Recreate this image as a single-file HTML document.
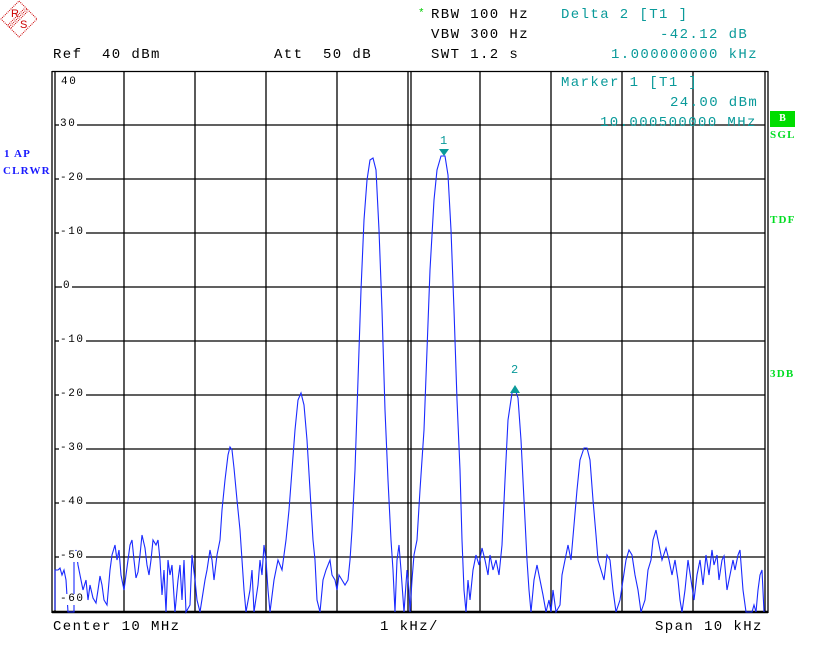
<!DOCTYPE html>
<html><head><meta charset="utf-8"><style>
body{margin:0;width:830px;height:670px;background:#fff;position:relative;overflow:hidden;font-family:"Liberation Mono",monospace;}
.t{position:absolute;font-size:14px;line-height:14px;white-space:pre;color:#000;letter-spacing:1.4px;}
.c{color:#0a9a9a;}
.g{position:absolute;font-family:"Liberation Serif",serif;font-weight:bold;font-size:11px;color:#00dd22;letter-spacing:1.2px;}
.bl{position:absolute;font-family:"Liberation Serif",serif;font-weight:bold;font-size:11px;color:#1a1aff;letter-spacing:1.2px;white-space:pre;}
.y{position:absolute;font-size:11px;line-height:11px;color:#000;background:#fff;padding:0 1px;letter-spacing:1.6px;}
</style></head><body>
<svg style="position:absolute;left:0;top:0" width="40" height="40">
<g stroke="#c00" fill="none" stroke-width="1" stroke-dasharray="1,1">
<polygon points="19,1 37,19 19,37 1,19"/>
<line x1="9" y1="27" x2="27" y2="9"/><line x1="11" y1="28" x2="28" y2="11"/><line x1="8" y1="25" x2="25" y2="8"/>
</g>
<text x="11" y="17" font-size="11" fill="#c00" font-family="Liberation Sans">R</text>
<text x="20" y="28" font-size="11" fill="#c00" font-family="Liberation Sans">S</text>
</svg>
<div class="t" style="left:53px;top:48px">Ref  40 dBm</div>
<div class="t" style="left:274px;top:48px">Att  50 dB</div>
<div class="t" style="left:418px;top:7px;color:#0c0;font-size:11px">*</div>
<div class="t" style="left:431px;top:8px">RBW 100 Hz</div>
<div class="t" style="left:431px;top:28px">VBW 300 Hz</div>
<div class="t" style="left:431px;top:48px">SWT 1.2 s</div>
<div class="t c" style="left:561px;top:8px">Delta 2 [T1 ]</div>
<div class="t c" style="left:660px;top:28px">-42.12 dB</div>
<div class="t c" style="left:611px;top:48px">1.000000000 kHz</div>
<svg style="position:absolute;left:0;top:0" width="830" height="670">
<g stroke="#000" stroke-width="1.3" fill="none">
<line x1="52" y1="71" x2="52" y2="613"/><line x1="55" y1="71" x2="55" y2="613"/>
<line x1="765" y1="71" x2="765" y2="613"/><line x1="768" y1="71" x2="768" y2="613"/>
<line x1="52" y1="71.5" x2="768" y2="71.5"/>
<line x1="124" y1="71" x2="124" y2="612"/><line x1="195" y1="71" x2="195" y2="612"/><line x1="266" y1="71" x2="266" y2="612"/><line x1="337" y1="71" x2="337" y2="612"/><line x1="408" y1="71" x2="408" y2="612"/><line x1="411" y1="71" x2="411" y2="612"/><line x1="480" y1="71" x2="480" y2="612"/><line x1="551" y1="71" x2="551" y2="612"/><line x1="622" y1="71" x2="622" y2="612"/><line x1="693" y1="71" x2="693" y2="612"/>
<line x1="55" y1="125" x2="765" y2="125"/><line x1="55" y1="179" x2="765" y2="179"/><line x1="55" y1="233" x2="765" y2="233"/><line x1="55" y1="287" x2="765" y2="287"/><line x1="55" y1="341" x2="765" y2="341"/><line x1="55" y1="395" x2="765" y2="395"/><line x1="55" y1="449" x2="765" y2="449"/><line x1="55" y1="503" x2="765" y2="503"/><line x1="55" y1="557" x2="765" y2="557"/>
<line x1="52" y1="612" x2="768" y2="612" stroke-width="2.5"/>
</g>
<polyline fill="none" stroke="#1a2aff" stroke-width="1.1" points="
55,610 55,570 58,570 60,568 62,575 64,570 66,580 68,612 74,612 74,560 76,550 78,565 80,575 83,590 86,580 88,600 90,585 93,598 96,603 98,590 100,576 102,585 104,600 107,605 110,570 112,555 115,545 117,560 119,550 121,575 124,590 126,575 128,560 130,545 132,540 134,560 136,578 138,572 140,555 142,535 145,548 147,565 149,575 151,560 153,540 156,545 158,540 160,560 162,595 164,570 166,612 168,560 170,575 172,565 175,612 178,580 180,565 182,600 184,560 186,612 190,605 192,555 195,580 197,600 200,612 205,580 207,570 210,550 212,560 214,580 217,555 220,540 222,510 225,480 228,455 230,447 232,450 234,468 237,500 240,530 242,560 244,590 246,612 250,590 252,570 254,612 258,585 260,560 262,575 264,545 266,560 268,590 270,612 274,580 278,560 282,570 286,540 289,510 292,470 295,430 298,400 301,393 304,405 307,440 310,490 313,540 315,560 317,600 320,612 323,580 326,570 330,560 332,575 335,580 337,590 339,575 342,580 345,585 348,580 350,560 352,530 355,470 358,380 361,290 364,220 367,180 370,160 373,158 376,170 379,230 382,310 385,410 388,480 391,540 393,570 395,612 397,560 399,545 401,570 404,612 407,570 409,590 410,612 412,580 414,555 417,540 420,490 424,430 427,350 430,270 434,200 437,170 441,156 445,156 448,175 451,230 454,310 457,400 460,470 462,540 464,590 466,612 468,580 470,600 473,570 476,555 479,565 482,548 485,560 488,575 490,555 493,570 496,560 499,575 502,545 505,480 508,420 512,393 515,389 518,398 521,440 524,500 527,560 529,590 531,612 534,580 537,565 540,580 543,595 546,612 549,600 551,612 553,590 556,612 560,605 562,575 565,560 568,545 571,560 574,525 577,490 580,460 584,448 587,448 590,460 593,500 596,535 598,560 601,570 604,580 607,555 610,560 613,590 616,612 620,600 623,580 626,560 629,550 632,555 635,575 638,590 641,612 645,600 648,570 651,560 653,540 656,530 659,545 662,560 666,548 669,560 672,575 675,560 678,580 680,600 682,612 685,590 688,560 691,580 694,600 697,575 700,560 703,585 706,555 709,575 712,550 714,565 717,555 719,580 722,560 724,556 727,590 730,575 733,560 735,570 738,555 740,550 743,590 746,612 752,612 754,605 756,612 758,590 760,575 762,570 764,612"/>
<text x="440" y="144" font-size="12" fill="#0a9a9a" font-family="Liberation Mono">1</text>
<polygon points="439,149 449,149 444,156" fill="#0a9a9a"/>
<text x="511" y="373" font-size="12" fill="#0a9a9a" font-family="Liberation Mono">2</text>
<polygon points="510,393 520,393 515,385" fill="#0a9a9a"/>
</svg>
<div class="y" style="left:60px;top:77px">40</div>
<div class="y" style="left:59px;top:119px">30</div>
<div class="y" style="left:59px;top:173px">-20</div>
<div class="y" style="left:59px;top:227px">-10</div>
<div class="y" style="left:62px;top:281px">0</div>
<div class="y" style="left:59px;top:335px">-10</div>
<div class="y" style="left:59px;top:389px">-20</div>
<div class="y" style="left:59px;top:443px">-30</div>
<div class="y" style="left:59px;top:497px">-40</div>
<div class="y" style="left:59px;top:551px">-50</div>
<div class="y" style="left:59px;top:594px">-60</div>
<div class="t c" style="left:561px;top:76px">Marker 1 [T1 ]</div>
<div class="t c" style="left:670px;top:96px">24.00 dBm</div>
<div class="t c" style="left:600px;top:116px">10.000500000 MHz</div>
<div style="position:absolute;left:770px;top:111px;width:25px;height:16px;background:#0d0;color:#fff;font:bold 10px 'Liberation Serif',serif;text-align:center;line-height:16px">B</div>
<div class="g" style="left:770px;top:129px">SGL</div>
<div class="g" style="left:770px;top:214px">TDF</div>
<div class="g" style="left:770px;top:368px">3DB</div>
<div class="bl" style="left:4px;top:148px">1 AP</div>
<div class="bl" style="left:3px;top:165px">CLRWR</div>
<div class="t" style="left:53px;top:620px">Center 10 MHz</div>
<div class="t" style="left:380px;top:620px">1 kHz/</div>
<div class="t" style="left:655px;top:620px">Span 10 kHz</div>
</body></html>
